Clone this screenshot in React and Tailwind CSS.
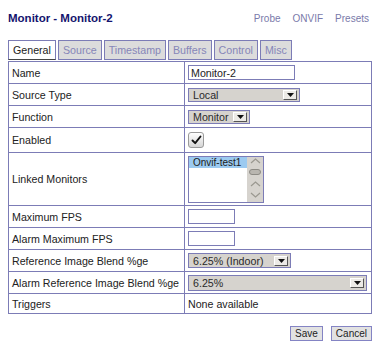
import React from 'react';

// arrow button used inside the gtk-looking selects
const Arrow = () => (
  <span className="flex h-[10px] w-[14px] items-center justify-center border border-t-white border-l-white border-b-[#555] border-r-[#555] bg-[#eceae6]">
    <svg width="7" height="4" viewBox="0 0 7 4">
      <path d="M0 0h7L3.5 4z" fill="#111" />
    </svg>
  </span>
);

const Select = ({ label, className }) => (
  <div className={`flex items-center justify-between border border-[#7c7cb6] bg-[#d6d3ce] pl-[4px] pr-[2px] ${className}`}>
    <span className="text-[10.67px] leading-[12px] text-[#2a2a2a]">{label}</span>
    <Arrow />
  </div>
);

const TextInput = ({ value, className }) => (
  <div className={`flex h-[15px] items-center border border-[#7c7cb6] bg-white pl-[2px] text-[10.67px] leading-[12px] text-[#222] ${className}`}>
    {value}
  </div>
);

const Checkbox = () => (
  <div className="flex h-[16px] w-[16px] items-center justify-center rounded-[3px] border border-[#9a9a9a] bg-gradient-to-b from-[#fefefe] to-[#d6d6d6]">
    <svg width="11" height="10" viewBox="0 0 11 10">
      <path d="M1.5 5.5L4.2 8.2L9.5 1.5" fill="none" stroke="#111" strokeWidth="1.9" strokeLinecap="round" strokeLinejoin="round" />
    </svg>
  </div>
);

const Chevron = ({ down }) => (
  <svg width="11" height="6" viewBox="0 0 11 6">
    <path d={down ? 'M1 1l4.5 4L10 1' : 'M1 5l4.5-4L10 5'} fill="none" stroke="#9a9890" strokeWidth="1.2" />
  </svg>
);

const ListBox = () => (
  <div className="flex h-[47px] w-[76px] border border-[#7c7cb6] bg-white">
    <div className="flex-1">
      <div className="h-[11px] bg-[#9ccaf0] pl-[4px] text-[10px] leading-[11px] text-[#1a1a1a]">Onvif-test1</div>
    </div>
    <div className="flex w-[16px] flex-col items-center bg-[#d6d3ce] pt-[1px]">
      <Chevron />
      <div className="mt-[5px] h-[6px] w-[12px] rounded-full border border-[#8d8b85] bg-[#b9b6b0]" />
      <div className="mt-[6px]"><Chevron /></div>
      <div className="mt-[5px]"><Chevron down /></div>
    </div>
  </div>
);

const rows = [
  { label: 'Name', h: 'h-[22px]', field: <TextInput value="Monitor-2" className="w-[107px]" /> },
  { label: 'Source Type', h: 'h-[22px]', field: <Select label="Local" className="h-[14px] w-[112px]" /> },
  { label: 'Function', h: 'h-[22px]', field: <Select label="Monitor" className="h-[14px] w-[62px]" /> },
  { label: 'Enabled', h: 'h-[25px]', field: <Checkbox /> },
  { label: 'Linked Monitors', h: 'h-[53px]', field: <ListBox /> },
  { label: 'Maximum FPS', h: 'h-[22px]', field: <TextInput value="" className="w-[47px]" /> },
  { label: 'Alarm Maximum FPS', h: 'h-[22px]', field: <TextInput value="" className="w-[47px]" /> },
  { label: 'Reference Image Blend %ge', h: 'h-[22px]', field: <Select label="6.25% (Indoor)" className="h-[15px] w-[103px]" /> },
  { label: 'Alarm Reference Image Blend %ge', h: 'h-[22px]', field: <Select label="6.25%" className="h-[16px] w-[179px]" /> },
  { label: 'Triggers', h: 'h-[20px]', field: <span>None available</span> },
];

const tabs = ['General', 'Source', 'Timestamp', 'Buffers', 'Control', 'Misc'];

const App = () => {
  return (
    <div className="min-h-screen bg-white px-[8px] pt-[11px] font-['Liberation_Sans',Arial,sans-serif] text-[#222]">
      {/* header */}
      <div className="flex items-baseline justify-between">
        <h1 className="text-[11.5px] font-bold leading-[14px] text-[#14146e]">Monitor - Monitor-2</h1>
        <div className="flex gap-[12px] pr-[1px] text-[10px] text-[#7a7aaa]">
          <span>Probe</span>
          <span>ONVIF</span>
          <span>Presets</span>
        </div>
      </div>

      {/* tabs */}
      <div className="mt-[14px] flex gap-[2px]">
        {tabs.map((t, i) =>
          i === 0 ? (
            <div key={t} className="h-[20px] border border-b-dotted border-[#7c7cb6] border-b-[#444] bg-white px-[4px] pt-[2px] text-[10.67px] leading-[14px] text-[#222]">
              {t}
            </div>
          ) : (
            <div key={t} className="h-[20px] border border-[#7c7cb6] bg-[#dcdcdc] px-[4px] pt-[2px] text-[10.67px] leading-[14px] text-[#8686b8]">
              {t}
            </div>
          )
        )}
      </div>

      {/* form table */}
      <div className="mt-[1px] w-[364px] border-l border-t border-[#7c7cb6]">
        {rows.map((r) => (
          <div key={r.label} className={`flex ${r.h}`}>
            <div className="flex w-[176px] items-center border-b border-r border-[#7c7cb6] pl-[3px] text-[10.67px] text-[#222]">
              {r.label}
            </div>
            <div className="flex flex-1 items-center border-b border-r border-[#7c7cb6] pl-[3px] text-[10.67px] text-[#222]">
              {r.field}
            </div>
          </div>
        ))}
      </div>

      {/* buttons */}
      <div className="mt-[12px] flex w-[364px] justify-end gap-[8px]">
        <button className="h-[15px] border border-[#8484c4] bg-[#e2e2e2] px-[4px] text-[10px] leading-[12px] text-[#222]">Save</button>
        <button className="h-[15px] border border-[#8484c4] bg-[#e2e2e2] px-[4px] text-[10px] leading-[12px] text-[#222]">Cancel</button>
      </div>
    </div>
  );
};

export default App;
